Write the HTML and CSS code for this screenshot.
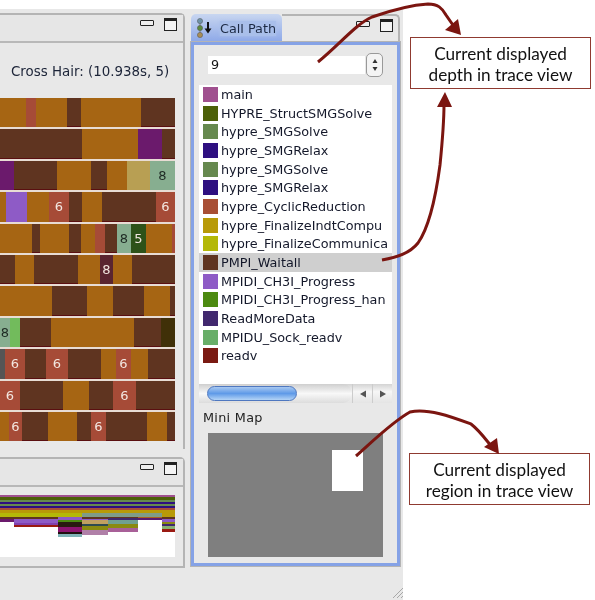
FILE: index.html
```html
<!DOCTYPE html>
<html lang="en">
<head>
    <meta charset="UTF-8">
    <meta name="viewport" content="width=device-width, initial-scale=1.0">
    <title>Trace View</title>
    <link rel="stylesheet" href="styles.css">
</head>
<body>
<div class="window">
    <div class="left-col">
        <section class="pane trace-pane">
            <div class="pane-head">
                <span class="btn-min"></span>
                <span class="btn-max"></span>
            </div>
            <div class="cross-hair">Cross Hair: (10.938s, 5)</div>
            <div class="trace">
                <div class="row">
                    <span class="seg orange" style="width: 26px"></span><span class="seg red" style="width: 10px"></span><span class="seg orange" style="width: 31px"></span><span class="seg brown" style="width: 14px"></span><span class="seg orange" style="width: 60px"></span><span class="seg brown" style="width: 34px"></span>
                </div>
                <div class="row">
                    <span class="seg brown" style="width: 82px"></span><span class="seg orange" style="width: 56px"></span><span class="seg purple" style="width: 24px"></span><span class="seg brown" style="width: 13px"></span>
                </div>
                <div class="row">
                    <span class="seg purple" style="width: 14px"></span><span class="seg brown" style="width: 43px"></span><span class="seg orange" style="width: 34px"></span><span class="seg brown" style="width: 16px"></span><span class="seg orange" style="width: 20px"></span><span class="seg tan" style="width: 23px"></span><span class="seg pale" style="width: 25px">8</span>
                </div>
                <div class="row">
                    <span class="seg orange" style="width: 6px"></span><span class="seg violet" style="width: 21px"></span><span class="seg orange" style="width: 22px"></span><span class="seg red" style="width: 20px">6</span><span class="seg brown" style="width: 13px"></span><span class="seg orange" style="width: 20px"></span><span class="seg brown" style="width: 54px"></span><span class="seg red" style="width: 19px">6</span>
                </div>
                <div class="row">
                    <span class="seg orange" style="width: 32px"></span><span class="seg brown" style="width: 8px"></span><span class="seg orange" style="width: 29px"></span><span class="seg brown" style="width: 12px"></span><span class="seg orange" style="width: 14px"></span><span class="seg red" style="width: 10px"></span><span class="seg brown" style="width: 12px"></span><span class="seg pale" style="width: 14px">8</span><span class="seg forest" style="width: 15px">5</span><span class="seg orange" style="width: 26px"></span><span class="seg red" style="width: 3px"></span>
                </div>
                <div class="row">
                    <span class="seg brown" style="width: 15px"></span><span class="seg orange" style="width: 19px"></span><span class="seg brown" style="width: 44px"></span><span class="seg orange" style="width: 22px"></span><span class="seg maroon" style="width: 13px">8</span><span class="seg orange" style="width: 19px"></span><span class="seg brown" style="width: 43px"></span>
                </div>
                <div class="row">
                    <span class="seg orange" style="width: 52px"></span><span class="seg brown" style="width: 35px"></span><span class="seg orange" style="width: 26px"></span><span class="seg brown" style="width: 31px"></span><span class="seg orange" style="width: 26px"></span><span class="seg brown" style="width: 5px"></span>
                </div>
                <div class="row">
                    <span class="seg pale" style="width: 10px">8</span><span class="seg lime" style="width: 10px"></span><span class="seg brown" style="width: 31px"></span><span class="seg orange" style="width: 83px"></span><span class="seg brown" style="width: 27px"></span><span class="seg olive" style="width: 14px"></span>
                </div>
                <div class="row">
                    <span class="seg slate" style="width: 5px"></span><span class="seg red" style="width: 20px">6</span><span class="seg brown" style="width: 21px"></span><span class="seg red" style="width: 22px">6</span><span class="seg brown" style="width: 33px"></span><span class="seg orange" style="width: 15px"></span><span class="seg red" style="width: 15px">6</span><span class="seg orange" style="width: 17px"></span><span class="seg brown" style="width: 27px"></span>
                </div>
                <div class="row">
                    <span class="seg red" style="width: 20px">6</span><span class="seg brown" style="width: 43px"></span><span class="seg orange" style="width: 26px"></span><span class="seg brown" style="width: 24px"></span><span class="seg red" style="width: 23px">6</span><span class="seg brown" style="width: 39px"></span>
                </div>
                <div class="row">
                    <span class="seg orange" style="width: 9px"></span><span class="seg red" style="width: 13px">6</span><span class="seg brown" style="width: 26px"></span><span class="seg orange" style="width: 29px"></span><span class="seg brown" style="width: 14px"></span><span class="seg red" style="width: 15px">6</span><span class="seg brown" style="width: 41px"></span><span class="seg orange" style="width: 20px"></span><span class="seg brown" style="width: 8px"></span>
                </div>
            </div>
        </section>

        <section class="pane depth-pane">
            <div class="pane-head">
                <span class="btn-min"></span>
                <span class="btn-max"></span>
            </div>
            <div class="depth-chart">
                <div class="depth-top"></div>
                <div class="depth-cols">
                    <span class="col col-a" style="width: 14px; height: 9px"></span>
                    <span class="col col-b" style="width: 44px; height: 14px"></span>
                    <span class="col col-c" style="width: 24px; height: 24px"></span>
                    <span class="col col-d" style="width: 26px; height: 22px"></span>
                    <span class="col col-e" style="width: 30px; height: 19px"></span>
                    <span class="col col-f" style="width: 24px; height: 7px"></span>
                    <span class="col col-g" style="width: 13px; height: 19px"></span>
                </div>
            </div>
        </section>
    </div>

    <section class="call-pane">
        <div class="call-head">
            <div class="tab">
                <svg class="tab-icon" width="20" height="20" viewBox="0 0 20 20">
                    <path d="M4 3V17" stroke="#777" stroke-width="1"/>
                    <circle cx="4" cy="3" r="2.6" fill="#6f93a8" stroke="#555" stroke-width=".5"/>
                    <circle cx="4" cy="10" r="2.6" fill="#5d8a3c" stroke="#555" stroke-width=".5"/>
                    <circle cx="4" cy="17" r="2.6" fill="#a88d58" stroke="#555" stroke-width=".5"/>
                    <path d="M12 4V12" stroke="#111" stroke-width="2"/>
                    <path d="M8.5 10.5H15.5L12 15.5Z" fill="#111"/>
                </svg>
                <span class="tab-label">Call Path</span>
            </div>
            <div class="call-btns">
                <span class="btn-min"></span>
                <span class="btn-max"></span>
            </div>
        </div>
        <div class="call-body">
            <div class="depth-row">
                <div class="depth-input">9</div>
                <div class="spinner">
                    <svg width="8" height="16" viewBox="0 0 8 16">
                        <path d="M4 2L6.5 6H1.5Z" fill="#333"/>
                        <path d="M4 14L6.5 10H1.5Z" fill="#333"/>
                    </svg>
                </div>
            </div>
            <ul class="call-list">
                <li><i style="background: #a0508f"></i><span>main</span></li>
                <li><i style="background: #4c6008"></i><span>HYPRE_StructSMGSolve</span></li>
                <li><i style="background: #66894e"></i><span>hypre_SMGSolve</span></li>
                <li><i style="background: #2e0f80"></i><span>hypre_SMGRelax</span></li>
                <li><i style="background: #66894e"></i><span>hypre_SMGSolve</span></li>
                <li><i style="background: #2e0f80"></i><span>hypre_SMGRelax</span></li>
                <li><i style="background: #a84f35"></i><span>hypre_CyclicReduction</span></li>
                <li><i style="background: #b89a08"></i><span>hypre_FinalizeIndtCompu</span></li>
                <li><i style="background: #b4b808"></i><span>hypre_FinalizeCommunica</span></li>
                <li class="selected"><i style="background: #5f3420"></i><span>PMPI_Waitall</span></li>
                <li><i style="background: #8e5bc6"></i><span>MPIDI_CH3I_Progress</span></li>
                <li><i style="background: #4c8a10"></i><span>MPIDI_CH3I_Progress_han</span></li>
                <li><i style="background: #41286e"></i><span>ReadMoreData</span></li>
                <li><i style="background: #68ae68"></i><span>MPIDU_Sock_readv</span></li>
                <li><i style="background: #7a1a12"></i><span>readv</span></li>
            </ul>
            <div class="scrollbar">
                <div class="scroll-track"><div class="scroll-thumb"></div></div>
                <div class="scroll-btn"><svg width="8" height="8" viewBox="0 0 8 8"><path d="M1 4L7 0.5V7.5Z" fill="#555"/></svg></div>
                <div class="scroll-btn"><svg width="8" height="8" viewBox="0 0 8 8"><path d="M7 4L1 0.5V7.5Z" fill="#555"/></svg></div>
            </div>
            <div class="mini-label">Mini Map</div>
            <div class="mini-map">
                <div class="mini-region"></div>
            </div>
        </div>
    </section>

    <svg class="grip" width="11" height="11" viewBox="0 0 11 11">
        <path d="M1 11L11 1M5 11L11 5M9 11L11 9" stroke="#a8a8a8" stroke-width="1"/>
    </svg>
</div>

<div class="note note-depth">Current displayed<br>depth in trace view</div>
<div class="note note-region">Current displayed<br>region in trace view</div>

<svg class="arrows" width="595" height="600" viewBox="0 0 595 600">
    <g fill="none" stroke="#7b1510" stroke-width="3">
        <path d="M318 62C340 44 356 24 372 17C392 10 412 5 428 4C438 4 442 8 446 15L455 28"/>
        <path d="M382 260C398 257 410 253 418 243C430 226 436 195 440 165C442 145 444 125 444 104"/>
        <path d="M356 456C372 442 392 422 410 412C428 408 452 417 471 424C480 431 486 440 492 447"/>
    </g>
    <g fill="#7b1510">
        <path d="M461 35L445 30L458 19Z"/>
        <path d="M445 92L452 107H437Z"/>
        <path d="M499 454L484 447L497 438Z"/>
    </g>
</svg>
</body>
</html>
```

FILE: styles.css
```css
html, body {
    margin: 0;
    padding: 0;
    height: 600px;
    overflow: hidden;
    background-color: white;
    font-family: "DejaVu Sans", sans-serif;
}

.window {
    position: relative;
    display: flex;
    gap: 6px;
    width: 403px;
    height: 591px;
    margin-top: 9px;
    padding-top: 4px;
    box-sizing: border-box;
    background-color: #e8e8e8;
    filter: blur(0.45px);
}

.left-col {
    display: flex;
    flex-direction: column;
    gap: 8px;
    width: 185px;
}

.pane {
    border-top: 2px solid #b4b4b4;
    border-right: 2px solid #b4b4b4;
    border-top-right-radius: 5px;
    box-sizing: border-box;
}

.trace-pane {
    height: 436px;
}

.depth-pane {
    height: 111px;
    border-bottom: 2px solid #b4b4b4;
}

.pane-head {
    display: flex;
    justify-content: flex-end;
    align-items: flex-start;
    gap: 10px;
    height: 28px;
    padding: 3px 6px 0 0;
    box-sizing: border-box;
    border-bottom: 2px solid #b8b8b8;
    background-color: #e6e6e6;
}

.btn-min {
    width: 12px;
    height: 4px;
    margin-top: 2px;
    border: 1px solid #222;
    border-radius: 1px;
    background-color: #eee;
}

.btn-max {
    width: 11px;
    height: 9px;
    border: 1px solid #222;
    border-top-width: 3px;
    background-color: #f4f4f4;
}

.cross-hair {
    height: 55px;
    padding: 21px 0 0 11px;
    box-sizing: border-box;
    font-size: 13.4px;
    line-height: 16px;
    white-space: nowrap;
    color: #1c2438;
}

.trace {
    display: flex;
    flex-direction: column;
    gap: 2px;
    width: 175px;
    background-color: #e8dcd4;
}

.row {
    display: flex;
    height: 29.4px;
}

.seg {
    display: flex;
    align-items: center;
    justify-content: center;
    font-size: 13px;
    color: #f2e6e0;
}

.orange { background-color: #a66513; }
.brown { background-color: #5f3420; border-bottom: 1px solid #5a0f10; box-sizing: border-box; }
.red { background-color: #a64b37; }
.purple { background-color: #6b1a6c; }
.violet { background-color: #8e5bc6; }
.tan { background-color: #b89f53; }
.pale { background-color: #87ae90; color: #1e2a24; }
.forest { background-color: #2d5219; }
.maroon { background-color: #5a2530; }
.lime { background-color: #72bb5c; }
.olive { background-color: #403008; }
.slate { background-color: #555555; }

.depth-chart {
    width: 175px;
    height: 62px;
    margin-top: 8px;
    background-color: white;
}

.depth-top {
    height: 18px;
    background: linear-gradient(to bottom,
        #a0508f 0 2px, #4c6008 2px 5px, #66894e 5px 7px, #2e0f80 7px 9px,
        #66894e 9px 11px, #2e0f80 11px 13px, #a84f35 13px 15px, #b89a08 15px 18px);
}

.depth-cols {
    display: flex;
    align-items: flex-start;
}

.col {
    display: block;
}

.col-a { background: linear-gradient(to bottom, #b4b808 0 4px, #5f3420 4px 6px, #6b1a6c 6px); }
.col-b { background: linear-gradient(to bottom, #b4b808 0 4px, #5f3420 4px 6px, #8e5bc6 6px 10px, #8040b0 10px 12px, #9a1a12 12px); }
.col-c { background: linear-gradient(to bottom, #b4b808 0 4px, #8e5bc6 4px 7px, #4c8a10 7px 9px, #2a1a10 9px 14px, #8c1470 14px 19px, #201010 19px 21px, #7fb4b8 21px); }
.col-d { background: linear-gradient(to bottom, #7f9c88 0 4px, #5f3420 4px 6px, #8e5bc6 6px 7px, #c0a060 7px 11px, #2e4a50 11px 13px, #8a8a10 13px 17px, #b080a8 17px); }
.col-e { background: linear-gradient(to bottom, #7f9c88 0 4px, #5f3420 4px 5px, #41286e 5px 7px, #70a090 7px 11px, #8a8a10 11px 15px, #a86098 15px); }
.col-f { background: linear-gradient(to bottom, #7f9c88 0 4px, #a86020 4px 5px, #5a1a70 5px); }
.col-g { background: linear-gradient(to bottom, #b89a08 0 4px, #5f3420 4px 6px, #8e5bc6 6px 9px, #8a8a10 9px 11px, #41286e 11px 13px, #88b070 13px 16px, #9a1a12 16px); }

.call-pane {
    width: 209px;
    height: 552px;
    margin-top: 1px;
}

.call-head {
    display: flex;
    height: 28px;
}

.tab {
    display: flex;
    align-items: center;
    gap: 4px;
    width: 91px;
    padding-left: 5px;
    box-sizing: border-box;
    border-top-left-radius: 5px;
    border-top-right-radius: 5px;
    background: linear-gradient(to bottom, #c8d6f0, #8da8e8);
}

.tab-label {
    font-size: 12.8px;
    color: #1c2a44;
    background-color: #a9bfea;
    box-shadow: 0 0 3px #a9bfea;
}

.call-btns {
    display: flex;
    flex: 1;
    justify-content: flex-end;
    gap: 10px;
    padding: 3px 5px 0 0;
    box-sizing: border-box;
    border-top: 2px solid #b4b4b4;
    border-right: 2px solid #b4b4b4;
    border-top-right-radius: 5px;
}

.call-body {
    width: 209px;
    height: 524px;
    padding: 8px 3px 0 5px;
    box-sizing: border-box;
    border: 3px solid #85a2e6;
    outline: 1px solid #b4b4b4;
}

.depth-row {
    display: flex;
    align-items: center;
    height: 24px;
    padding-left: 9px;
    gap: 1px;
}

.depth-input {
    width: 157px;
    height: 18px;
    padding-left: 3px;
    box-sizing: border-box;
    background-color: white;
    font-size: 12.8px;
    line-height: 18px;
    color: #111;
}

.spinner {
    display: flex;
    align-items: center;
    justify-content: center;
    width: 15px;
    height: 22px;
    border: 1px solid #999;
    border-radius: 5px;
    background-color: #f4f4f4;
}

.call-list {
    width: 193px;
    height: 299px;
    margin: 8px 0 0;
    padding: 0;
    list-style: none;
    background-color: white;
}

.call-list li {
    display: flex;
    align-items: center;
    gap: 3px;
    height: 18.7px;
    padding-left: 4px;
    overflow: hidden;
    white-space: nowrap;
    font-size: 12.8px;
    color: #14182a;
}

.call-list li i {
    flex: none;
    width: 15px;
    height: 15px;
}

.call-list li.selected {
    background-color: #cfcfcf;
}

.scrollbar {
    display: flex;
    width: 193px;
    height: 19px;
    background: linear-gradient(to bottom, #d4d4d4, #f6f6f6 40%, #e4e4e4);
}

.scroll-track {
    flex: 1;
    padding: 2px 0 0 8px;
    box-sizing: border-box;
    border-radius: 0 9px 9px 0;
    background: linear-gradient(to bottom, #cfcfcf, #f8f8f8 50%, #dcdcdc);
}

.scroll-thumb {
    width: 90px;
    height: 15px;
    box-sizing: border-box;
    border: 1px solid #4f78c0;
    border-radius: 8px;
    background: linear-gradient(to bottom, #a8c8f0, #5f9ae8 50%, #b4d4f6);
}

.scroll-btn {
    display: flex;
    align-items: center;
    justify-content: center;
    width: 20px;
    border-left: 1px solid #ccc;
    box-sizing: border-box;
}

.mini-label {
    height: 14px;
    margin-top: 8px;
    padding-left: 4px;
    font-size: 12.8px;
    letter-spacing: 0.3px;
    line-height: 14px;
    color: #222;
}

.mini-map {
    position: relative;
    width: 175px;
    height: 124px;
    margin: 8px 0 0 9px;
    background-color: #7f7f7f;
}

.mini-region {
    position: absolute;
    left: 124px;
    top: 17px;
    width: 31px;
    height: 41px;
    background-color: white;
}

.grip {
    position: absolute;
    right: 0;
    bottom: 2px;
}

.note {
    position: absolute;
    width: 181px;
    padding: 5px 0 3px;
    box-sizing: border-box;
    border: 1px solid #8f3a30;
    background-color: white;
    font-family: Lato, sans-serif;
    font-size: 17.2px;
    line-height: 21px;
    text-align: center;
    color: #111;
    filter: blur(0.3px);
}

.note-depth {
    left: 410px;
    top: 37px;
}

.note-region {
    left: 409px;
    top: 453px;
}

.arrows {
    position: absolute;
    left: 0;
    top: 0;
    filter: blur(0.3px);
}
```
